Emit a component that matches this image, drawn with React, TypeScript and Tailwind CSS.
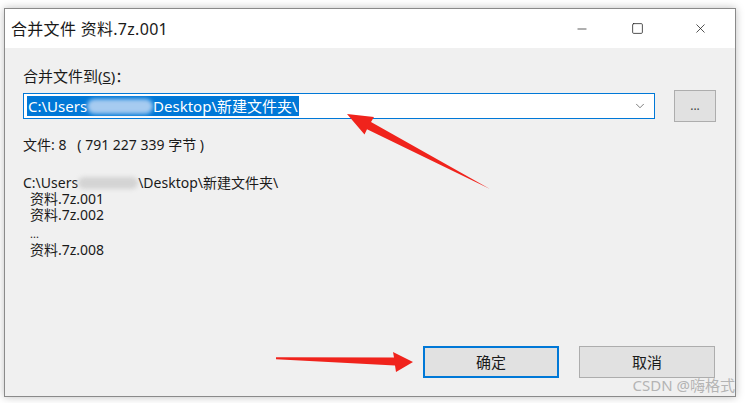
import { ChevronDown, Minus, Square, X } from 'lucide-react'

const files = ['资料.7z.001', '资料.7z.002']

export default function App() {
  return (
    <div className="relative w-[746px] h-[403px] overflow-hidden bg-white font-['Noto_Sans','Noto_Sans_CJK_SC',sans-serif] text-[#1a1a1a]">
      {/* window */}
      <div className="ml-[4px] mt-[8px] w-[732px] h-[389px] flex flex-col border border-[#8a8a8a] bg-[#f0f0f0] shadow-[0_0_8px_rgba(0,0,0,0.25)]">
        {/* title bar */}
        <div className="h-[39px] bg-white flex items-center">
          <div className="pl-[6px] text-[16px] leading-none tracking-[0.3px] flex-1">合并文件 资料.7z.001</div>
          <div className="w-[54px] h-full flex items-center justify-center">
            <Minus className="w-[14px] h-[14px]" strokeWidth={1.2} />
          </div>
          <div className="w-[56px] h-full flex items-center justify-center">
            <Square className="w-[13px] h-[13px]" strokeWidth={1.4} />
          </div>
          <div className="w-[70px] h-full flex items-center justify-center">
            <X className="w-[15px] h-[15px]" strokeWidth={1.2} />
          </div>
        </div>

        {/* body */}
        <div className="flex-1 flex flex-col px-[18px] pt-[19px] text-[14px]">
          <div className="text-[15px] leading-[18px]">
            合并文件到(<span className="underline">S</span>)
            <span className="font-['Noto_Sans_CJK_SC',sans-serif]">：</span>
          </div>

          <div className="mt-[5px] flex items-center">
            <div className="w-[632px] h-[26px] bg-white border border-[#0078d7] flex items-center pl-[3px] pr-[7px]">
              <div className="flex-1 flex items-center">
                <span className="h-[20px] bg-[#0078d7] text-white text-[15px] leading-[20px] px-[1px] flex items-center">
                  C:\Users
                  <span className="inline-block w-[66px] h-[15px] rounded-full bg-[#a6cbf0] blur-[2px]" />
                  Desktop\新建文件夹\
                </span>
              </div>
              <ChevronDown className="w-[14px] h-[14px] text-[#555]" strokeWidth={1.3} />
            </div>
            <div className="ml-[19px] w-[42px] h-[32px] bg-[#e1e1e1] border border-[#adadad] flex items-center justify-center text-[12px] text-[#444]">
              ...
            </div>
          </div>

          <div className="mt-[14px] leading-[18px]">文件: 8&nbsp;&nbsp;&nbsp;( 791 227 339 字节 )</div>

          <div className="mt-[21px] leading-[16px]">
            <div className="flex items-center">
              C:\Users
              <span className="inline-block w-[60px] h-[12px] rounded-full bg-[#d4d4d4] blur-[2px]" />
              \Desktop\新建文件夹\
            </div>
            {files.map((f) => (
              <div key={f} className="pl-[7px]">{f}</div>
            ))}
            <div className="pl-[7px] h-[19px] text-[11px] leading-[21px]">...</div>
            <div className="pl-[7px]">资料.7z.008</div>
          </div>

          <div className="mt-auto mb-[18px] flex justify-end gap-[20px] pr-[2px]">
            <div className="w-[136px] h-[32px] bg-[#e1e1e1] border-2 border-[#0078d7] flex items-center justify-center text-[15px]">
              确定
            </div>
            <div className="w-[136px] h-[32px] bg-[#e1e1e1] border border-[#adadad] flex items-center justify-center text-[15px]">
              取消
            </div>
          </div>
        </div>
      </div>

      {/* annotations */}
      <svg className="absolute left-0 top-0 pointer-events-none" width="746" height="403">
        <polygon
          fill="#f0231c"
          points="490,189 371,122 374,117 347,114 364.5,134.5 367,129.2"
        />
        <polygon
          fill="#f0231c"
          points="276,357.2 394,357.5 393,352 413,362 396,372 395,365.5 276,359.2"
        />
      </svg>
      <div className="absolute right-[11px] top-[376px] text-[15px] leading-[18px] text-[#b4b4b4]">CSDN @嗨格式</div>
    </div>
  )
}
